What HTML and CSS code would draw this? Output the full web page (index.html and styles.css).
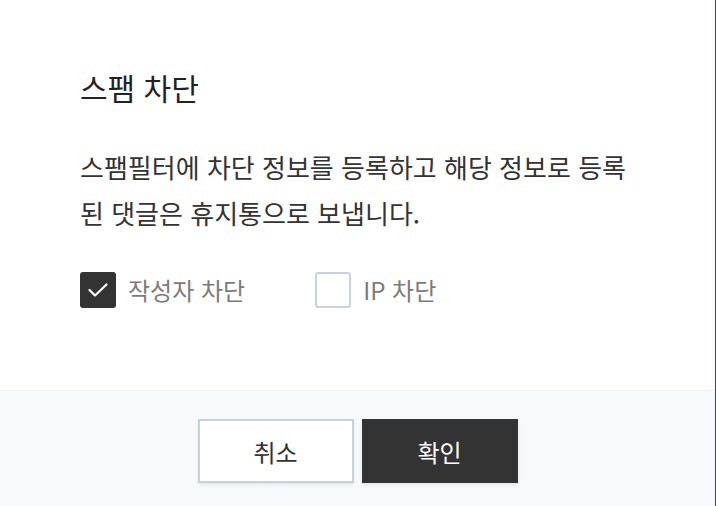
FILE: index.html
```html
<!DOCTYPE html>
<html lang="ko">
<head>
<meta charset="utf-8">
<title>스팸 차단</title>
<link rel="stylesheet" href="styles.css">
</head>
<body>
<div class="dialog">
  <div class="content">
    <h1 class="title">스팸 차단</h1>
    <p class="desc">스팸필터에 차단 정보를 등록하고 해당 정보로 등록 된 댓글은 휴지통으로 보냅니다.</p>
    <div class="options">
      <label class="option">
        <span class="box checked">
          <svg viewBox="0 0 36 36" width="36" height="36"><path d="M9.5 18 L15 23.5 L26.5 12.5" fill="none" stroke="#fff" stroke-width="2.2" stroke-linecap="round" stroke-linejoin="round"/></svg>
        </span>
        <span class="label">작성자 차단</span>
      </label>
      <label class="option">
        <span class="box"></span>
        <span class="label">IP 차단</span>
      </label>
    </div>
  </div>
  <div class="footer">
    <button class="btn btn-cancel">취소</button>
    <button class="btn btn-ok">확인</button>
  </div>
</div>
</body>
</html>
```
FILE: styles.css
```css
html, body {
  margin: 0;
  padding: 0;
  height: 100%;
}
body {
  background: #3c4450;
  font-family: "Noto Sans CJK KR", "Noto Sans", sans-serif;
  overflow: hidden;
}
.dialog {
  width: 715px;
  height: 506px;
  background: #ffffff;
  display: flex;
  flex-direction: column;
}
.content {
  padding: 66px 80px 82px 80px;
}
.title {
  margin: 0;
  font-size: 30px;
  line-height: 42px;
  font-weight: 400;
  color: #222222;
}
.desc {
  margin: 36px 0 0 0;
  font-size: 26px;
  line-height: 46px;
  color: #333333;
  font-weight: 400;
}
.options {
  margin-top: 36px;
  display: flex;
  align-items: center;
  gap: 70px;
}
.option {
  display: flex;
  align-items: center;
  gap: 12px;
}
.box {
  width: 36px;
  height: 36px;
  box-sizing: border-box;
  border: 2px solid #cad2dc;
  border-radius: 3px;
  background: #fff;
  display: flex;
  align-items: center;
  justify-content: center;
}
.box.checked {
  background: #333333;
  border: none;
}
.label {
  font-size: 24px;
  line-height: 36px;
  color: #7b7b7b;
}
.footer {
  flex: 1;
  border-top: 1px solid #eef0f3;
  background: #f8f9fb;
  display: flex;
  justify-content: center;
  align-items: flex-start;
  gap: 8px;
  padding-top: 28px;
}
.btn {
  width: 156px;
  height: 64px;
  box-sizing: border-box;
  font-family: "Noto Sans CJK KR", "Noto Sans", sans-serif;
  font-size: 24px;
  border-radius: 0;
  cursor: pointer;
  box-shadow: 0 2px 3px rgba(0, 0, 0, 0.08);
}
.btn-cancel {
  background: #ffffff;
  border: 2px solid #c8d1db;
  color: #333333;
}
.btn-ok {
  background: #333333;
  border: none;
  color: #ffffff;
}
```
